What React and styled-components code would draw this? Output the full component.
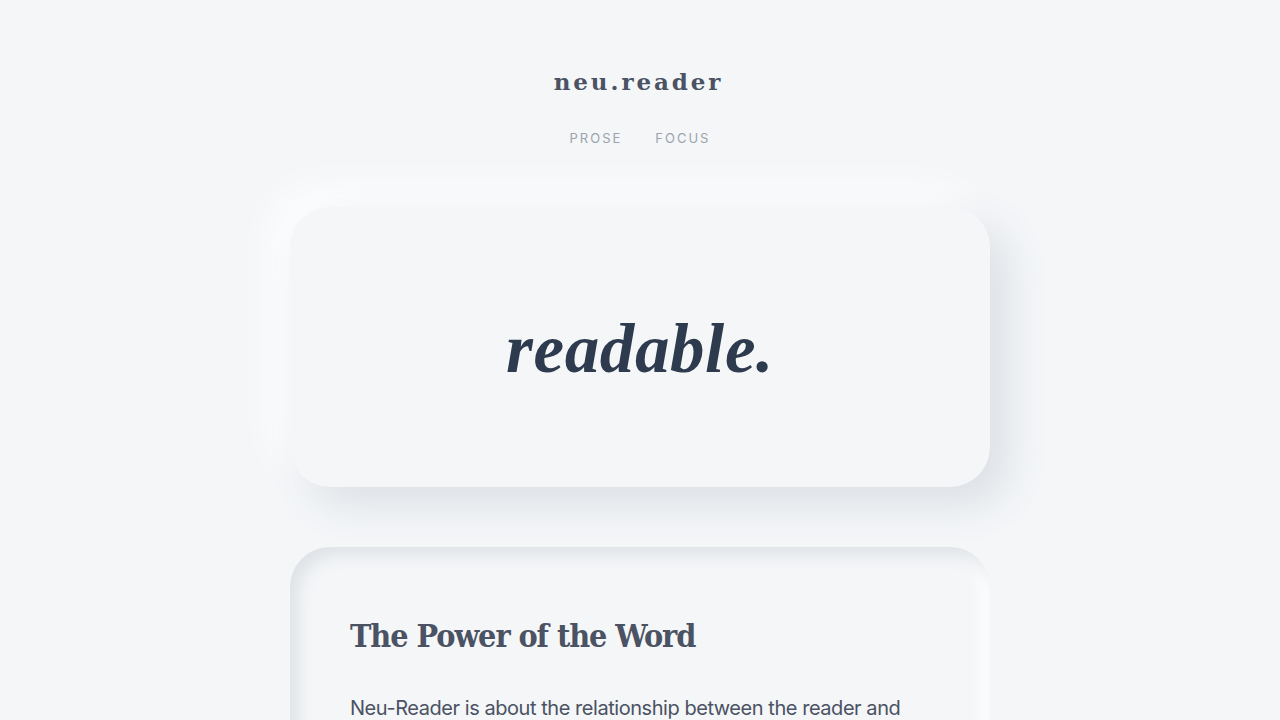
import styled, { createGlobalStyle } from "styled-components";

const GlobalStyle = createGlobalStyle`
  html, body {
    margin: 0;
    padding: 0;
    background: #f4f6f8;
  }
  body {
    font-family: "Inter", "Liberation Sans", sans-serif;
    color: #4a5568;
  }
  * { box-sizing: border-box; }
`

const Page = styled.div`
  min-height: 100vh;
  display: flex;
  flex-direction: column;
  align-items: center;
  padding-top: 67px;
`

const Header = styled.header`
  display: flex;
  flex-direction: column;
  align-items: center;
  gap: 33px;
`

const Logo = styled.h1`
  margin: 0;
  font-family: "DejaVu Serif", "Liberation Serif", serif;
  font-size: 23px;
  font-weight: 700;
  letter-spacing: 2.9px;
  color: #4a5263;
  line-height: 1.3;
  margin-right: 3px;
`

const Nav = styled.nav`
  display: flex;
  gap: 33px;
`

const NavLink = styled.a`
  font-size: 13px;
  letter-spacing: 2px;
  text-transform: uppercase;
  color: #9ca3af;
  text-decoration: none;
  cursor: pointer;
`

const Main = styled.main`
  display: flex;
  flex-direction: column;
  gap: 60px;
  margin-top: 61px;
  width: 700px;
`

const HeroCard = styled.section`
  height: 280px;
  border-radius: 40px;
  background: #f4f6f8;
  box-shadow: 18px 18px 40px #dde0e5, -18px -18px 40px rgba(255, 255, 255, 0.85);
  display: flex;
  align-items: center;
  justify-content: center;
  padding-top: 6px;
`

const HeroTitle = styled.h2`
  margin: 0;
  font-family: "Liberation Serif", "DejaVu Serif", serif;
  font-style: italic;
  font-weight: 700;
  font-size: 69px;
  color: #2e3b4e;
  letter-spacing: 0.6px;
`

const ArticleCard = styled.article`
  border-radius: 40px;
  background: #f4f6f8;
  box-shadow: inset 8px 8px 16px #dfe2e6, inset -8px -8px 16px #ffffff;
  padding: 70px 60px 60px;
`

const ArticleTitle = styled.h3`
  margin: 0 0 36px;
  font-family: "DejaVu Serif", "Liberation Serif", serif;
  font-stretch: condensed;
  font-size: 32px;
  font-weight: 700;
  color: #4a5263;
  letter-spacing: -1.05px;
`

const Paragraph = styled.p`
  margin: 0;
  font-size: 20px;
  line-height: 1.7;
  color: #4a5263;
  letter-spacing: -0.45px;
`

export default function App() {
  return (
    <>
      <GlobalStyle />
      <Page>
        <Header>
          <Logo>neu.reader</Logo>
          <Nav>
            <NavLink>Prose</NavLink>
            <NavLink>Focus</NavLink>
          </Nav>
        </Header>
        <Main>
          <HeroCard>
            <HeroTitle>readable.</HeroTitle>
          </HeroCard>
          <ArticleCard>
            <ArticleTitle>The Power of the Word</ArticleTitle>
            <Paragraph>
              Neu-Reader is about the relationship between the reader and
              the text. Every surface is soft, every edge is quiet, so that
              nothing stands between you and the words on the page.
            </Paragraph>
          </ArticleCard>
        </Main>
      </Page>
    </>
  );
}
